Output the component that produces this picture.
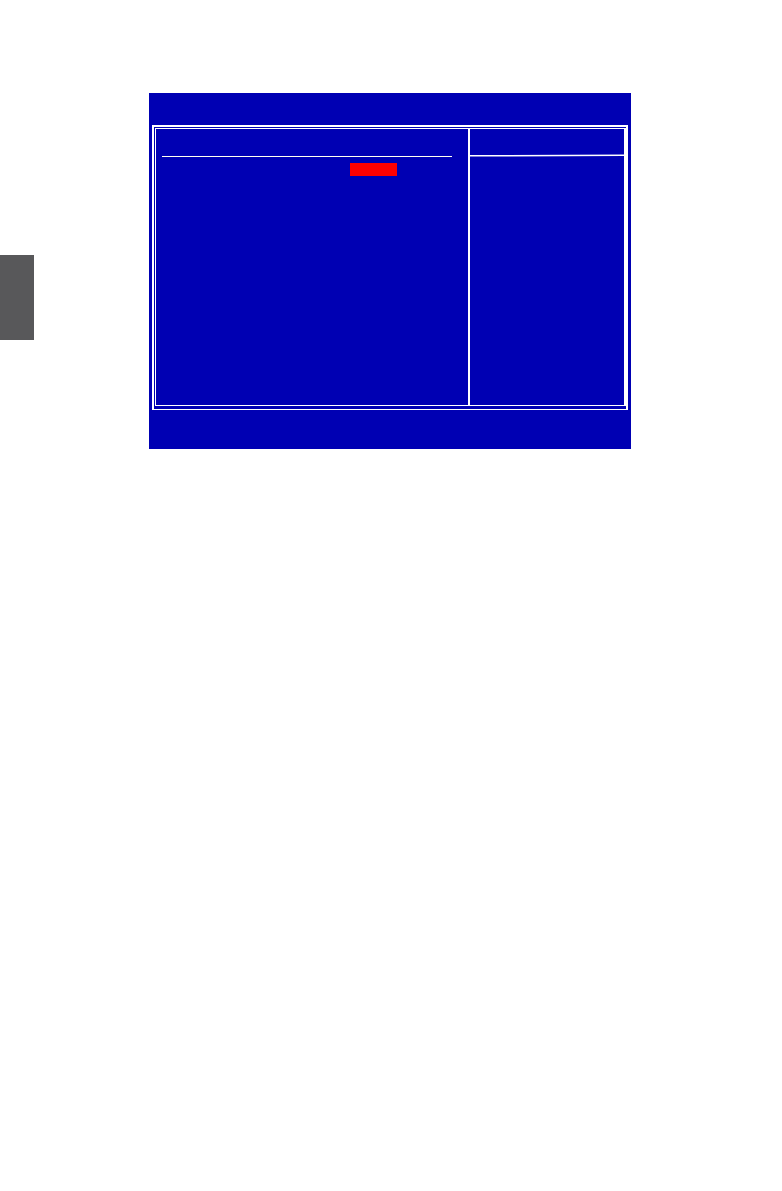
<style>
  :global(body) {
    margin: 0;
    background: #fff;
  }

  .page {
    display: grid;
    grid-template-columns: 34px 1fr;
    column-gap: 115px;
    align-items: start;
    padding: 93px 151px 93px 0;
  }

  /* thumb index on the edge of the page */
  .tab {
    height: 85px;
    margin-top: 162px;
    background: #58585a;
  }

  .screen {
    padding: 32px 3px 39px;
    background: #0000b3;
  }

  /* double frame, the two lines touch on the right side */
  .outer {
    padding: 1px 0 3px 1px;
    border: 2px solid #fff;
    border-bottom-width: 1px;
  }
  .inner {
    display: grid;
    grid-template-columns: minmax(0, 1fr) 156px;
    min-height: 276px;
    border: 1px solid #fff;
    border-right-width: 2px;
  }

  .settings {
    padding: 0 16px 0 6px;
  }
  .title {
    height: 27px;
    border-bottom: 1px solid #fffff0;
  }
  .row {
    display: grid;
    grid-template-columns: 188px 47px;
    padding-top: 6px;
  }
  .selected {
    grid-column: 2;
    height: 13px;
    background: #f00;
  }

  .help {
    border-left: 2px solid #fff;
  }
  .help-title {
    height: 25px;
  }
  .rule {
    display: block;
    width: 100%;
    height: 3px;
  }
</style>

<main class="page">
  <aside class="tab"></aside>

  <section class="screen">
    <div class="outer">
      <div class="inner">
        <div class="settings">
          <div class="title"></div>
          <div class="row">
            <span class="selected"></span>
          </div>
        </div>
        <div class="help">
          <div class="help-title"></div>
          <!-- the rule rises slightly to the right -->
          <svg class="rule" viewBox="0 0 154 3" preserveAspectRatio="none" aria-hidden="true">
            <line x1="0" y1="1.8" x2="154" y2="1.2" stroke="#fff" stroke-width="1.5"></line>
          </svg>
        </div>
      </div>
    </div>
  </section>
</main>
